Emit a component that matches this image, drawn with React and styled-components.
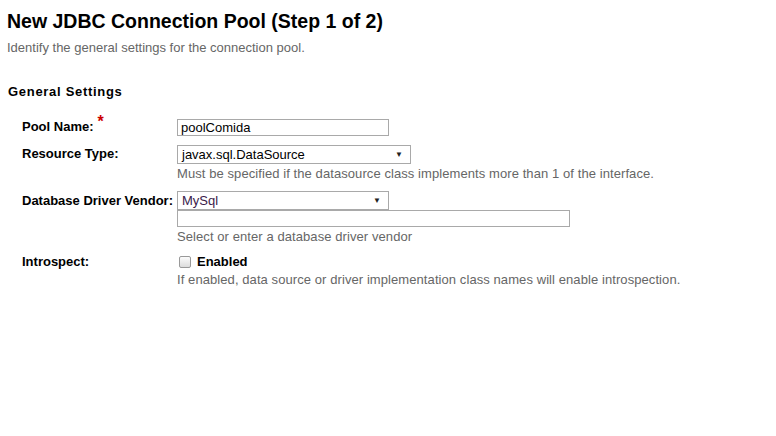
import React from 'react'
import styled, { createGlobalStyle } from 'styled-components'

const GlobalStyle = createGlobalStyle`
  html, body {
    margin: 0;
    padding: 0;
    background: #fff;
  }
  body {
    font-family: "Liberation Sans", Arial, sans-serif;
    color: #000;
  }
`

const Page = styled.div`
  padding: 9px 7px 0 7px;
`

const Title = styled.h1`
  margin: 0;
  font-size: 19.5px;
  font-weight: bold;
  line-height: 24px;
`

const Subtitle = styled.div`
  margin-top: 7px;
  font-size: 13px;
  line-height: 16px;
  color: #666;
`

const SectionTitle = styled.h2`
  margin: 28px 0 0 1px;
  font-size: 13px;
  font-weight: bold;
  line-height: 16px;
  letter-spacing: 0.7px;
`

const Form = styled.div`
  margin-top: 19px;
  padding-left: 15px;
  display: grid;
  grid-template-columns: 155px 1fr;
  row-gap: 9px;
`

const Label = styled.div`
  font-size: 13px;
  font-weight: bold;
  line-height: 16px;
  padding-top: ${(p) => p.$top ?? 1}px;
`

const Required = styled.sup`
  color: #c00;
  font-size: 16px;
  margin-left: 4px;
  vertical-align: 4px;
  line-height: 0;
`

const Field = styled.div`
  display: flex;
  flex-direction: column;
  align-items: flex-start;
`

const TextInput = styled.div`
  box-sizing: border-box;
  width: ${(p) => p.$width}px;
  height: 17px;
  border: 1px solid #a9a9a9;
  font-size: 13px;
  line-height: 15px;
  padding: 0 3px;
  color: #000;
`

const Select = styled.div`
  box-sizing: border-box;
  width: ${(p) => p.$width}px;
  height: 19px;
  border: 1px solid #a9a9a9;
  font-size: 13px;
  line-height: 17px;
  padding: 0 4px;
  display: flex;
  justify-content: space-between;
  align-items: center;
  color: ${(p) => p.$color || '#000'};
`

const Arrow = styled.span`
  font-size: 8px;
  color: #222;
  margin-right: 3px;
`

const Help = styled.div`
  font-size: 13px;
  line-height: 16px;
  letter-spacing: 0.08px;
  color: #666;
  margin-top: ${(p) => p.$top ?? 1}px;
  margin-bottom: ${(p) => p.$bottom ?? 0}px;
`

const CheckRow = styled.label`
  display: flex;
  align-items: center;
  gap: 6px;
  font-size: 13px;
  font-weight: bold;
  line-height: 16px;
`

const Box = styled.span`
  box-sizing: border-box;
  width: 12px;
  height: 12px;
  margin-left: 2px;
  border: 1px solid #999;
  border-radius: 2px;
  background: linear-gradient(#fcfcfc, #dcdcdc);
`

export default function App() {
  return (
    <Page>
      <GlobalStyle />
      <Title>New JDBC Connection Pool (Step 1 of 2)</Title>
      <Subtitle>Identify the general settings for the connection pool.</Subtitle>
      <SectionTitle>General Settings</SectionTitle>
      <Form>
        <Label $top={0}>
          Pool Name:<Required>*</Required>
        </Label>
        <Field>
          <TextInput $width={212}>poolComida</TextInput>
        </Field>

        <Label>Resource Type:</Label>
        <Field>
          <Select $width={234}>
            javax.sql.DataSource
            <Arrow>▼</Arrow>
          </Select>
          <Help $top={2}>Must be specified if the datasource class implements more than 1 of the interface.</Help>
        </Field>

        <Label $top={2}>Database Driver Vendor:</Label>
        <Field>
          <Select $width={212} $color="#3a1a4a">
            MySql
            <Arrow>▼</Arrow>
          </Select>
          <TextInput $width={393} />
          <Help $top={2}>Select or enter a database driver vendor</Help>
        </Field>

        <Label $top={0}>Introspect:</Label>
        <Field>
          <CheckRow>
            <Box />
            Enabled
          </CheckRow>
          <Help $top={2}>If enabled, data source or driver implementation class names will enable introspection.</Help>
        </Field>
      </Form>
    </Page>
  )
}
